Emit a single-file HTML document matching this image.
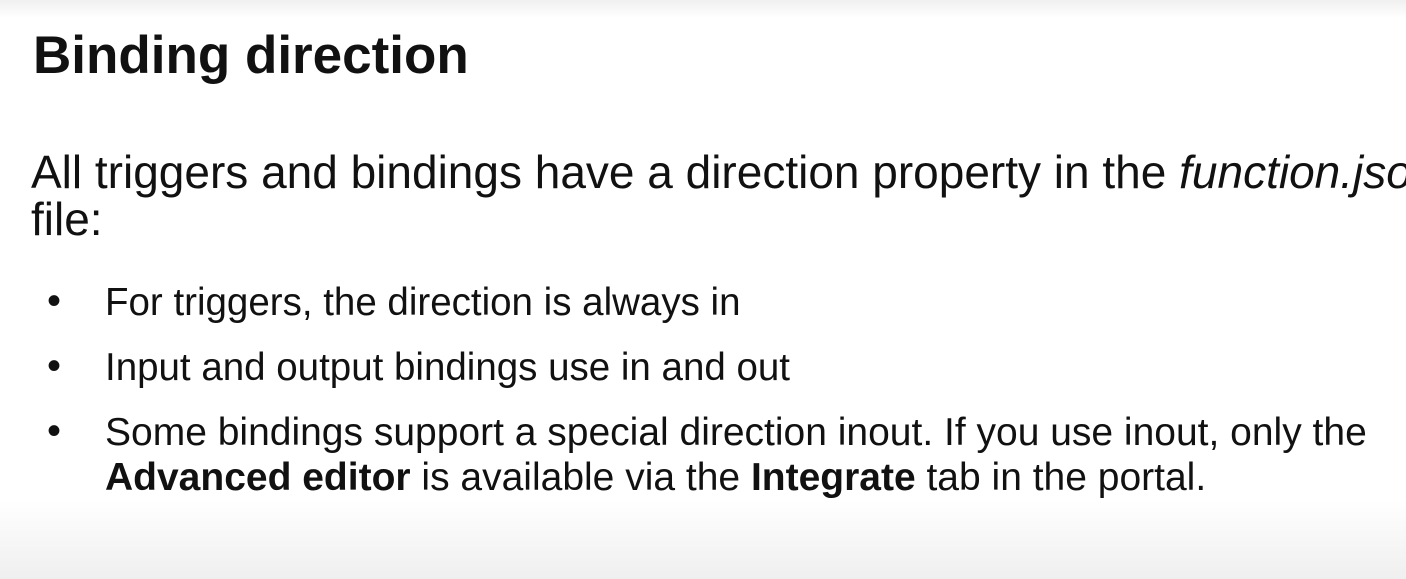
<!DOCTYPE html>
<html><head><style>
html,body{margin:0;padding:0}
body{width:1406px;height:579px;overflow:hidden;position:relative;font-family:"Liberation Sans",sans-serif;color:#111;
background:linear-gradient(to bottom,#f0f0f0 0px,#fff 18px,#fff 500px,#efefef 579px);}
.t{position:absolute;white-space:nowrap}
h1{position:absolute;left:33px;top:25px;margin:0;font-size:53px;font-weight:bold;white-space:nowrap}
.b{position:absolute;left:47px;font-size:40px}
.l{position:absolute;left:105px;font-size:39px;white-space:nowrap}
</style></head><body>
<h1>Binding direction</h1>
<div class="t" style="left:31px;top:145px;font-size:46px">All triggers and bindings have a direction property in the <i>function.json</i></div>
<div class="t" style="left:31px;top:192px;font-size:46px">file:</div>
<div class="t b" style="top:279px">•</div>
<div class="l" style="top:281px;font-size:38.5px">For triggers, the direction is always in</div>
<div class="t b" style="top:344px">•</div>
<div class="l" style="top:346px;font-size:38.5px">Input and output bindings use in and out</div>
<div class="t b" style="top:409px">•</div>
<div class="l" style="top:411px">Some bindings support a special direction inout. If you use inout, only the</div>
<div class="l" style="top:456px"><b>Advanced editor</b> is available via the <b>Integrate</b> tab in the portal.</div>
</body></html>
